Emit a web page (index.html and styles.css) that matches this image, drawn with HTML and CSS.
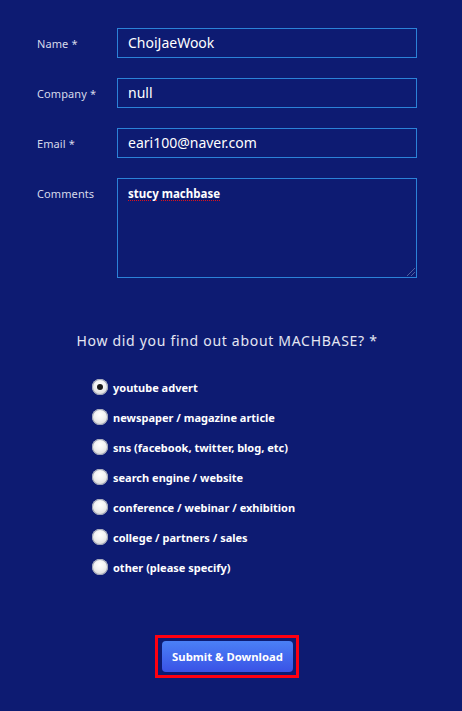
FILE: index.html
```html
<!DOCTYPE html>
<html>
<head>
<meta charset="utf-8">
<link rel="stylesheet" href="styles.css">
</head>
<body>
<form class="form">
  <div class="fields">
    <label class="label">Name *</label>
    <div class="input">ChoiJaeWook</div>
    <label class="label">Company *</label>
    <div class="input">null</div>
    <label class="label">Email *</label>
    <div class="input">eari100@naver.com</div>
    <label class="label">Comments</label>
    <div class="textarea"><span class="spell">stucy</span> <span class="spell">machbase</span><span class="grip"></span></div>
  </div>
  <h2 class="question">How did you find out about MACHBASE? *</h2>
  <ul class="radios">
    <li class="radio-row"><span class="radio checked"></span>youtube advert</li>
    <li class="radio-row"><span class="radio"></span>newspaper / magazine article</li>
    <li class="radio-row"><span class="radio"></span>sns (facebook, twitter, blog, etc)</li>
    <li class="radio-row"><span class="radio"></span>search engine / website</li>
    <li class="radio-row"><span class="radio"></span>conference / webinar / exhibition</li>
    <li class="radio-row"><span class="radio"></span>college / partners / sales</li>
    <li class="radio-row"><span class="radio"></span>other (please specify)</li>
  </ul>
  <div class="submit-wrap">
    <div class="highlight"><button type="button" class="submit">Submit &amp; Download</button></div>
  </div>
</form>
</body>
</html>
```
FILE: styles.css
```css
* { box-sizing: border-box; }
html, body { margin: 0; padding: 0; }
body {
  background: #0d1b72;
  width: 462px;
  height: 711px;
  overflow: hidden;
  font-family: "Noto Sans", "Liberation Sans", sans-serif;
  color: #fff;
}
.form {
  width: 454px;
  padding-top: 28px;
}
.fields {
  display: grid;
  grid-template-columns: 80px 300px;
  row-gap: 20px;
  padding-left: 37px;
}
.label {
  font-size: 11px;
  line-height: 28px;
  padding-top: 2px;
  color: #d6d9ea;
  letter-spacing: 0.1px;
}
.input {
  height: 30px;
  border: 1px solid #2b82d8;
  padding: 0 10px;
  font-size: 14px;
  line-height: 28px;
  color: #fff;
}
.textarea {
  position: relative;
  height: 100px;
  border: 1px solid #2b82d8;
  padding: 6px 10px;
  font-size: 11.5px;
  font-weight: 700;
  line-height: 18px;
  color: #fff;
}
.spell {
  text-decoration: underline dotted #e0121a;
  text-decoration-thickness: 1px;
  text-underline-offset: 2px;
}
.grip {
  position: absolute;
  right: 1px;
  bottom: 1px;
  width: 10px;
  height: 10px;
  background: repeating-linear-gradient(135deg, transparent 0 2px, #4f5f9c 2px 3px);
  clip-path: polygon(100% 0, 100% 100%, 0 100%);
}
.question {
  margin: 53px 0 0;
  text-align: center;
  font-size: 14px;
  font-weight: 400;
  letter-spacing: 0.7px;
  line-height: 20px;
  color: #e4e6f2;
}
.radios {
  list-style: none;
  margin: 21px 0 0;
  padding: 0 0 0 92px;
}
.radio-row {
  display: flex;
  align-items: center;
  height: 30px;
  font-size: 11px;
  font-weight: 700;
  color: #fff;
}
.radio {
  width: 16px;
  height: 16px;
  border-radius: 50%;
  margin-right: 5px;
  background: radial-gradient(circle at 50% 35%, #ffffff 0, #f2f2f2 40%, #c9c9c9 100%);
  box-shadow: inset 0 0 0 1px #9ea3b5;
  position: relative;
}
.radio.checked::after {
  content: "";
  position: absolute;
  left: 5px;
  top: 5px;
  width: 6px;
  height: 6px;
  border-radius: 50%;
  background: #1b1b1b;
}
.submit-wrap {
  display: flex;
  justify-content: center;
  margin-top: 53px;
}
.highlight {
  border: 3px solid #ff0010;
  padding: 3px 3px 3px 4px;
}
.submit {
  display: block;
  width: 131px;
  height: 31px;
  border: none;
  border-radius: 4px;
  background: linear-gradient(#4a80f6, #3a52e6);
  color: #fff;
  font-family: "Noto Sans", "Liberation Sans", sans-serif;
  font-size: 11.3px;
  font-weight: 700;
  padding: 0;
}
```
